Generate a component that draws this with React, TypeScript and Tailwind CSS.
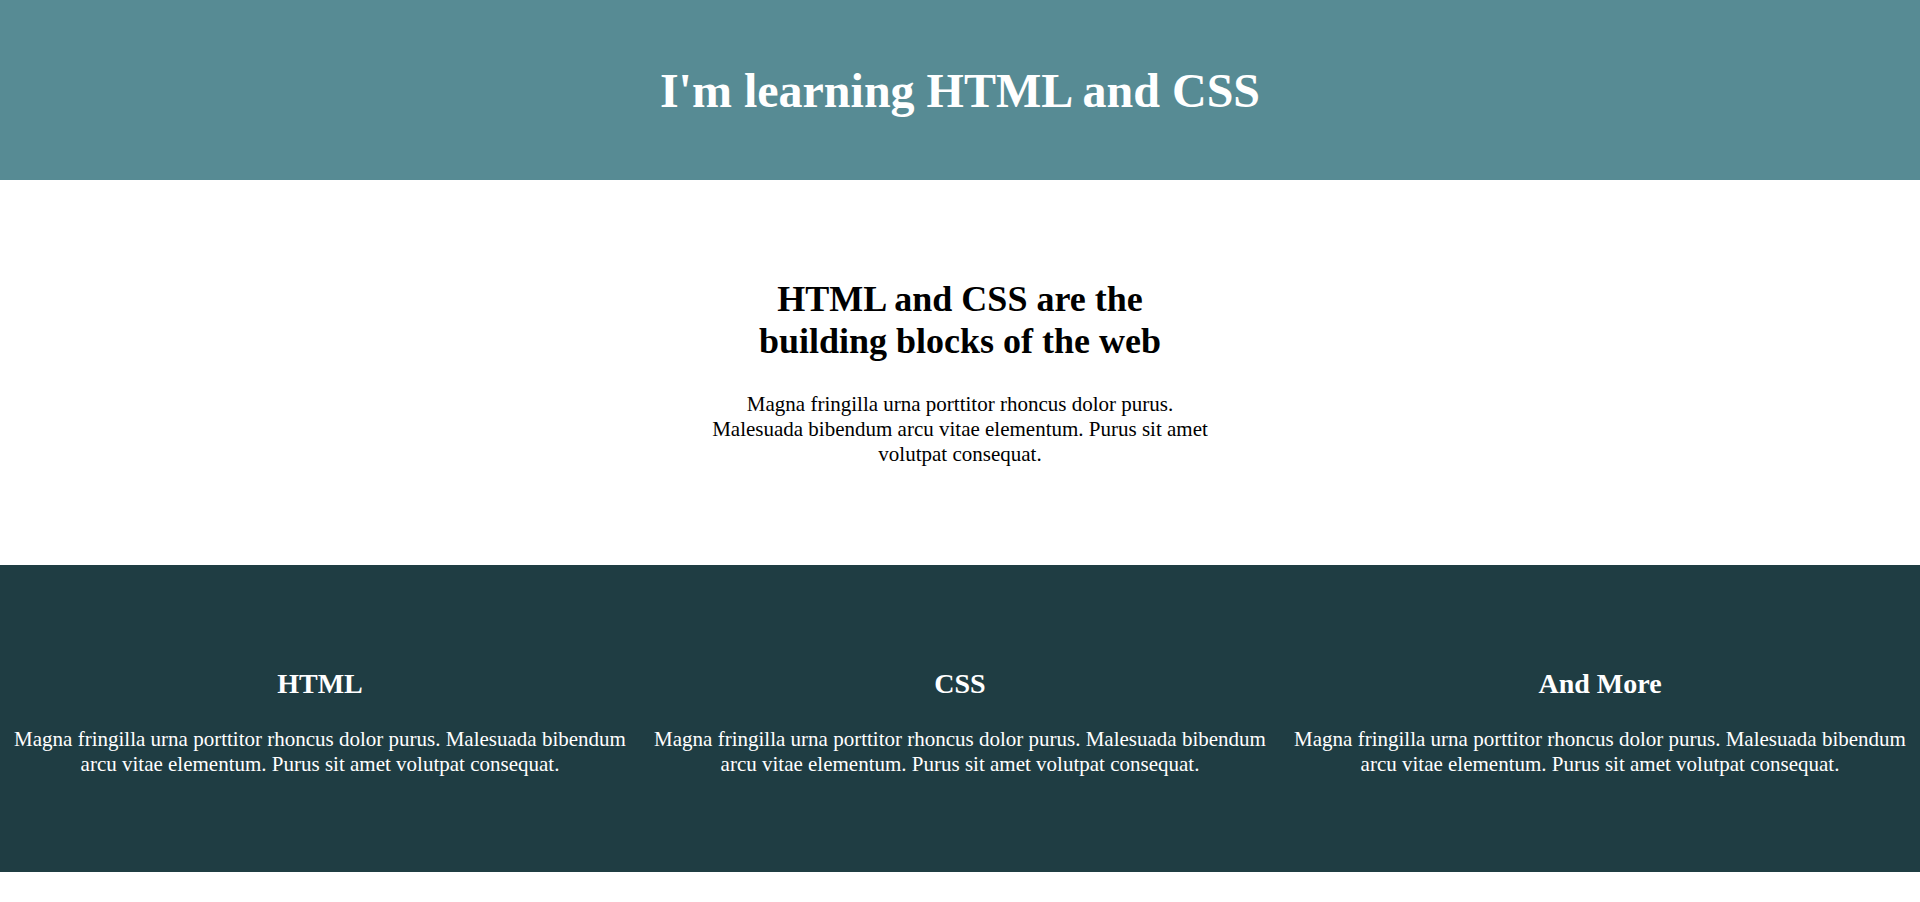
import React from "react";

const lorem =
  "Magna fringilla urna porttitor rhoncus dolor purus. Malesuada bibendum arcu vitae elementum. Purus sit amet volutpat consequat.";

const cols = ["HTML", "CSS", "And More"];

export default function App() {
  return (
    <div className="min-h-[902px] bg-white font-['Liberation_Serif','Times_New_Roman',serif] leading-[normal]">
      <header className="flex h-[180px] items-center justify-center bg-[#578b94]">
        <h1 className="text-[48px] font-bold leading-[normal] text-white">I'm learning HTML and CSS</h1>
      </header>

      <section className="flex h-[385px] flex-col items-center pt-[98px]">
        <div className="w-[500px] text-center text-black">
          <h2 className="mb-[30px] text-[36px] font-bold leading-[normal]">
            HTML and CSS are the building blocks of the web
          </h2>
          <p className="text-[21px] leading-[normal]">{lorem}</p>
        </div>
      </section>

      <section className="grid h-[307px] grid-cols-3 bg-[#1f3d43] pt-[103px] text-center text-white">
        {cols.map((c) => (
          <div key={c}>
            <h3 className="mb-[27px] text-[28px] font-bold leading-[normal]">{c}</h3>
            <p className="text-[21px] leading-[normal]">{lorem}</p>
          </div>
        ))}
      </section>
    </div>
  );
}
